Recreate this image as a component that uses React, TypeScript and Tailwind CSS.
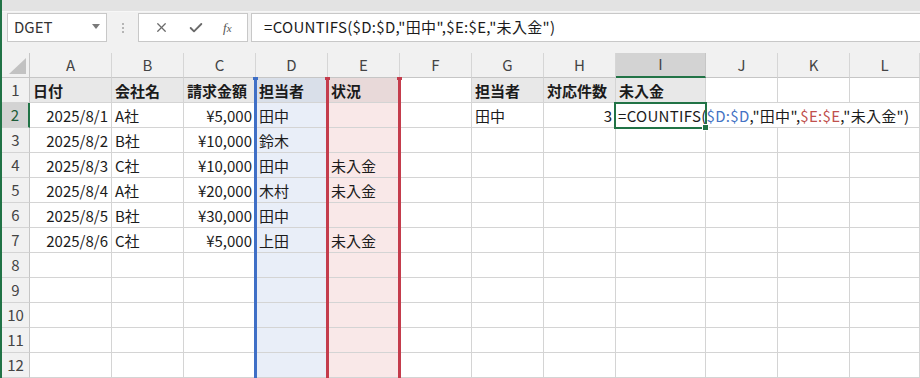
import { X, Check } from 'lucide-react';

const FONT = { fontFamily: '"Noto Sans CJK JP", "Noto Sans", sans-serif' };

const COLS = ['A', 'B', 'C', 'D', 'E', 'F', 'G', 'H', 'I', 'J', 'K', 'L'];

type Cell = { v?: string; right?: boolean; bold?: boolean };

const DATA: Record<number, Cell[]> = {
  1: [
    { v: '日付', bold: true }, { v: '会社名', bold: true }, { v: '請求金額', bold: true },
    { v: '担当者', bold: true }, { v: '状況', bold: true }, {},
    { v: '担当者', bold: true }, { v: '対応件数', bold: true }, { v: '未入金', bold: true }, {}, {}, {},
  ],
  2: [{ v: '2025/8/1', right: true }, { v: 'A社' }, { v: '¥5,000', right: true }, { v: '田中' }, {}, {}, { v: '田中' }, { v: '3', right: true }],
  3: [{ v: '2025/8/2', right: true }, { v: 'B社' }, { v: '¥10,000', right: true }, { v: '鈴木' }],
  4: [{ v: '2025/8/3', right: true }, { v: 'C社' }, { v: '¥10,000', right: true }, { v: '田中' }, { v: '未入金' }],
  5: [{ v: '2025/8/4', right: true }, { v: 'A社' }, { v: '¥20,000', right: true }, { v: '木村' }, { v: '未入金' }],
  6: [{ v: '2025/8/5', right: true }, { v: 'B社' }, { v: '¥30,000', right: true }, { v: '田中' }],
  7: [{ v: '2025/8/6', right: true }, { v: 'C社' }, { v: '¥5,000', right: true }, { v: '上田' }, { v: '未入金' }],
};

function cellBg(row: number, col: number) {
  if (col === 3) return row === 1 ? 'bg-[#d9dfe9]' : 'bg-[#e9eef8]';
  if (col === 4) return row === 1 ? 'bg-[#e8d9d9]' : 'bg-[#f9e8e8]';
  if (row === 1 && [0, 1, 2, 6, 7, 8].includes(col)) return 'bg-[#e8e8e8]';
  return 'bg-white';
}

function Formula() {
  return (
    <span className="tracking-[0.3px]">
      =COUNTIFS(<span className="text-[#4472c4]">$D:$D</span>,"田中",<span className="text-[#c0504d]">$E:$E</span>,"未入金")
    </span>
  );
}

export default function App() {
  const rows = Array.from({ length: 12 }, (_, i) => i + 1);

  return (
    <div className="flex w-[920px] h-[378px] overflow-hidden bg-[#f1f1f1] text-[15px] text-[#1b1b1b]" style={FONT}>
      <div className="w-[2px] shrink-0 bg-[#217346]" />
      <div className="flex-1 flex flex-col min-w-0">
        {/* toolbar */}
        <div className="h-[12px] bg-[#e3e3e3] border-b border-[#f7f7f7]" />
        <div className="h-[41px] flex items-start pt-[1px] pl-[5px] bg-[#f1f1f1]">
          <div className="w-[100px] h-[29px] bg-white border border-[#c8c8c8] flex items-center justify-between pl-[6px] pr-[6px] text-[#333]">
            <span className="text-[15px]">DGET</span>
            <span className="w-0 h-0 border-l-[4px] border-r-[4px] border-t-[5px] border-l-transparent border-r-transparent border-t-[#7a7a7a] mb-[2px]" />
          </div>
          <div className="w-[31px] h-[29px] flex flex-col items-center justify-center gap-[2px]">
            <span className="w-[2px] h-[2px] bg-[#b5b5b5]" />
            <span className="w-[2px] h-[2px] bg-[#b5b5b5]" />
            <span className="w-[2px] h-[2px] bg-[#b5b5b5]" />
          </div>
          <div className="w-[110px] h-[29px] bg-white border border-[#c8c8c8] flex items-center justify-around px-[6px] text-[#6a6a6a]">
            <X size={15} strokeWidth={2} />
            <Check size={16} strokeWidth={2.8} />
            <span className="italic text-[13px] text-[#555]" style={{ fontFamily: '"Liberation Serif", serif' }}>
              f<span className="text-[11px]">x</span>
            </span>
          </div>
          <div className="ml-[3px] flex-1 h-[29px] bg-white border border-[#c8c8c8] border-r-0 flex items-center pl-[12px] whitespace-nowrap">
            <span className="tracking-[0.3px]">=COUNTIFS($D:$D,"田中",$E:$E,"未入金")</span>
          </div>
        </div>

        {/* sheet */}
        <div className="relative grid grid-cols-[28px_82px_72px_72px_72px_72px_72px_72px_72px_90px_72px_72px_1fr] grid-rows-[repeat(13,25px)]">
          {/* header row */}
          <div className="relative bg-[#f1f1f1] border-r border-b border-[#c6c6c6]">
            <svg className="absolute right-[3px] bottom-[3px]" width="17" height="16" viewBox="0 0 17 16">
              <polygon points="17,0 17,16 0,16" fill="#c2c2c2" />
            </svg>
          </div>
          {COLS.map((c, i) => (
            <div
              key={c}
              className={`flex items-center justify-center text-[#444] border-r ${
                i === 8
                  ? 'bg-[#d3d3d3] border-b-2 border-b-[#217346] border-r-[#c6c6c6]'
                  : 'bg-[#f1f1f1] border-b border-[#c6c6c6] border-r-[#d6d6d6]'
              }`}
            >
              {c}
            </div>
          ))}

          {rows.map((r) => (
            <div key={r} className="contents">
              <div
                className={`flex items-center justify-center border-b border-[#d4d4d4] ${
                  r === 2
                    ? 'bg-[#d3d3d3] border-r-2 border-r-[#217346] text-[#1d5c38]'
                    : 'bg-[#f1f1f1] border-r border-r-[#c6c6c6] text-[#444]'
                }`}
              >
                {r}
              </div>
              {COLS.map((_, ci) => {
                const cell = DATA[r]?.[ci] ?? {};
                const isActive = r === 2 && ci === 8;
                const noRight = r === 2 && (ci === 9 || ci === 10);
                return (
                  <div
                    key={ci}
                    className={`flex items-center pt-[2px] px-[3px] border-b border-[#d4d4d4] whitespace-nowrap ${
                      noRight ? '' : 'border-r'
                    } ${cellBg(r, ci)} ${cell.right ? 'justify-end' : 'justify-start'} ${
                      cell.bold ? 'font-bold' : ''
                    } ${isActive ? 'relative z-10 overflow-visible pl-[2px]' : 'overflow-hidden'}`}
                  >
                    {isActive ? <Formula /> : cell.v}
                  </div>
                );
              })}
            </div>
          ))}

          {/* range reference borders */}
          <div className="absolute left-[252px] top-[25px] bottom-0 w-[3px] bg-[#3f6fc6] z-20" />
          <div className="absolute left-[251px] top-[24px] w-[5px] h-[3px] bg-[#3f6fc6] z-20" />
          <div className="absolute left-[324px] top-[25px] bottom-0 w-[3px] bg-[#c43c4c] z-20" />
          <div className="absolute left-[323px] top-[24px] w-[5px] h-[3px] bg-[#c43c4c] z-20" />
          <div className="absolute left-[396px] top-[25px] bottom-0 w-[3px] bg-[#c43c4c] z-20" />
          <div className="absolute left-[395px] top-[24px] w-[5px] h-[3px] bg-[#c43c4c] z-20" />

          {/* active cell */}
          <div className="absolute left-[612px] top-[49px] w-[93px] h-[27px] border-2 border-[#217346] z-20 pointer-events-none" />
          <div className="absolute left-[700px] top-[71px] w-[7px] h-[7px] bg-[#217346] border border-white z-30" />
        </div>
      </div>
    </div>
  );
}
